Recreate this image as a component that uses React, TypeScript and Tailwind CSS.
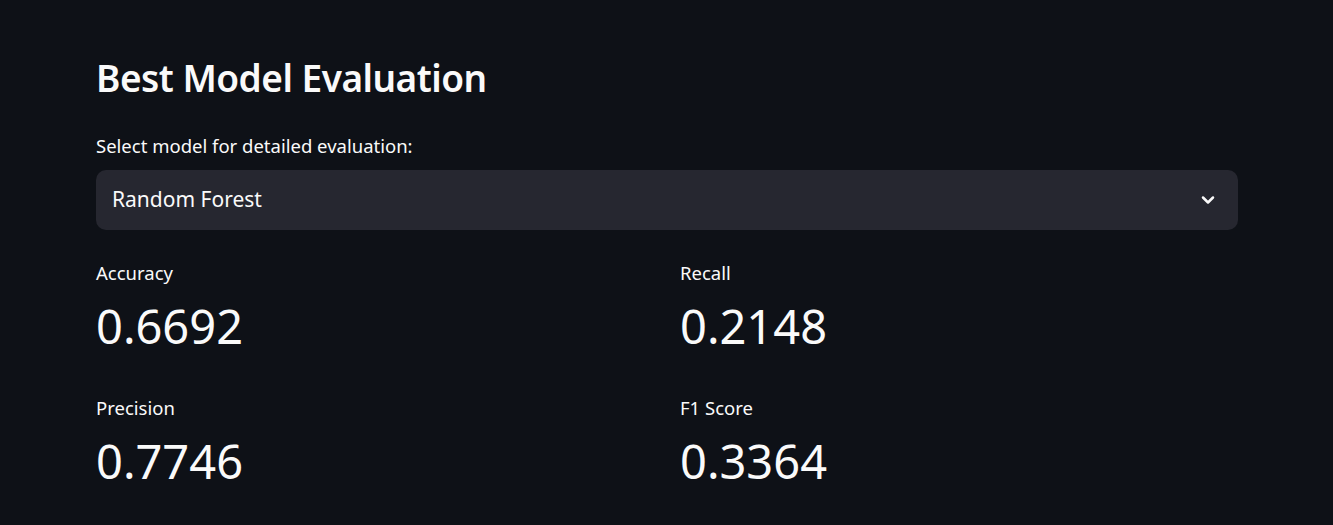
import React from 'react';

const metrics = [
  { label: 'Accuracy', value: '0.6692' },
  { label: 'Recall', value: '0.2148' },
  { label: 'Precision', value: '0.7746' },
  { label: 'F1 Score', value: '0.3364' },
];

function Metric({ label, value }: { label: string; value: string }) {
  return (
    <div className="flex flex-col">
      <div className="text-[18.5px] leading-[24px] text-[#fafafa]">{label}</div>
      <div className="mt-[13px] text-[47px] leading-[56px] text-[#fafafa]">{value}</div>
    </div>
  );
}

export default function App() {
  return (
    <div
      className="min-h-[525px] w-full bg-[#0e1117] text-[#fafafa]"
      style={{ fontFamily: '"Noto Sans", "Open Sans", sans-serif' }}
    >
      <div className="ml-[96px] w-[1142px] pt-[54px]">
        {/* Header */}
        <h2 className="text-[37px] font-semibold leading-[48px] tracking-[-0.5px]">Best Model Evaluation</h2>

        {/* Model select */}
        <div className="mt-[32px] text-[18.5px] leading-[24px]">Select model for detailed evaluation:</div>
        <div className="mt-[12px] flex h-[60px] items-center justify-between rounded-[10px] bg-[#262730] px-4">
          <span className="text-[21px]">Random Forest</span>
          <svg width="20" height="20" viewBox="0 0 24 24" fill="none" stroke="#fafafa" strokeWidth="3" strokeLinecap="round" strokeLinejoin="round" className="mr-[4px]">
            <path d="M6 9l6 6 6-6" />
          </svg>
        </div>

        {/* Metrics */}
        <div className="mt-[31px] grid grid-cols-2 gap-x-[26px] gap-y-[42px]">
          {metrics.map((m) => (
            <Metric key={m.label} label={m.label} value={m.value} />
          ))}
        </div>
      </div>
    </div>
  );
}
